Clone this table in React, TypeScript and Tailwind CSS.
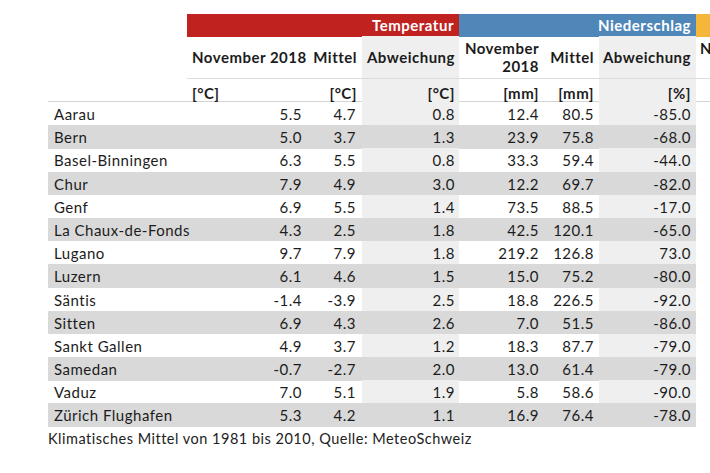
const rows: [string, string, string, string, string, string, string][] = [
  ['Aarau', '5.5', '4.7', '0.8', '12.4', '80.5', '-85.0'],
  ['Bern', '5.0', '3.7', '1.3', '23.9', '75.8', '-68.0'],
  ['Basel-Binningen', '6.3', '5.5', '0.8', '33.3', '59.4', '-44.0'],
  ['Chur', '7.9', '4.9', '3.0', '12.2', '69.7', '-82.0'],
  ['Genf', '6.9', '5.5', '1.4', '73.5', '88.5', '-17.0'],
  ['La Chaux-de-Fonds', '4.3', '2.5', '1.8', '42.5', '120.1', '-65.0'],
  ['Lugano', '9.7', '7.9', '1.8', '219.2', '126.8', '73.0'],
  ['Luzern', '6.1', '4.6', '1.5', '15.0', '75.2', '-80.0'],
  ['Säntis', '-1.4', '-3.9', '2.5', '18.8', '226.5', '-92.0'],
  ['Sitten', '6.9', '4.3', '2.6', '7.0', '51.5', '-86.0'],
  ['Sankt Gallen', '4.9', '3.7', '1.2', '18.3', '87.7', '-79.0'],
  ['Samedan', '-0.7', '-2.7', '2.0', '13.0', '61.4', '-79.0'],
  ['Vaduz', '7.0', '5.1', '1.9', '5.8', '58.6', '-90.0'],
  ['Zürich Flughafen', '5.3', '4.2', '1.1', '16.9', '76.4', '-78.0'],
]

const cols = 'grid grid-cols-[139px_123px_52px_97px_84px_56px_97px_60px]'

export default function App() {
  return (
    <div className="w-[710px] h-[473px] overflow-hidden bg-white text-[#1c1c1c] font-['Lato','Open_Sans',sans-serif] text-[15px] tracking-[0.5px]">
      <div className="ml-[48px] mt-[14px] w-[800px]">
        {/* Gruppen-Kopf */}
        <div className={`${cols} h-[22px] font-bold text-white`}>
          <div />
          <div className="col-span-3 bg-[#c0231f] flex items-center justify-end pr-[5px]">Temperatur</div>
          <div className="col-span-3 bg-[#4f87b9] flex items-center justify-end pr-[5px]">Niederschlag</div>
          <div className="bg-[#f5b73b]" />
        </div>

        {/* Spaltenköpfe */}
        <div className={`${cols} h-[43px] font-bold leading-[18px]`}>
          <div />
          <div className="flex items-center pl-[5px] border-b border-[#dcdcdc] whitespace-nowrap">November 2018</div>
          <div className="flex items-center justify-end pr-[5px] border-b border-[#dcdcdc]">Mittel</div>
          <div className="flex items-center justify-end pr-[4px] bg-[#efefef] border-b border-[#dcdcdc]">Abweichung</div>
          <div className="flex flex-col items-end justify-center pr-[4px] border-b border-[#dcdcdc]">
            <span>November</span>
            <span>2018</span>
          </div>
          <div className="flex items-center justify-end pr-[5px] border-b border-[#dcdcdc]">Mittel</div>
          <div className="flex items-center justify-end pr-[5px] bg-[#efefef] border-b border-[#dcdcdc]">Abweichung</div>
          <div className="pl-[4px] pt-[3px] border-b border-[#dcdcdc]">November</div>
        </div>

        {/* Einheiten */}
        <div className={`${cols} h-[23px] font-bold border-b border-[#d4d4d4]`}>
          <div />
          <div className="flex items-center pt-[3px] pl-[5px]">[°C]</div>
          <div className="flex items-center pt-[3px] justify-end pr-[5px]">[°C]</div>
          <div className="flex items-center pt-[3px] justify-end pr-[4px] bg-[#efefef]">[°C]</div>
          <div className="flex items-center pt-[3px] justify-end pr-[4px]">[mm]</div>
          <div className="flex items-center pt-[3px] justify-end pr-[5px]">[mm]</div>
          <div className="flex items-center pt-[3px] justify-end pr-[5px] bg-[#efefef]">[%]</div>
          <div />
        </div>

        {/* Daten */}
        {rows.map((r, i) => {
          const odd = i % 2 === 1
          const abw = odd ? '' : 'bg-[#efefef]'
          return (
            <div key={r[0]} className={`${cols} h-[23.2px] items-stretch`}>
              <div className={`col-span-7 grid grid-cols-[139px_123px_52px_97px_84px_56px_97px] ${odd ? 'bg-[#d9d9d9]' : ''}`}>
                <div className="flex items-center pt-[1px] pl-[6px] whitespace-nowrap">{r[0]}</div>
                <div className="flex items-center pt-[1px] justify-end pr-[8px]">{r[1]}</div>
                <div className="flex items-center pt-[1px] justify-end pr-[6px]">{r[2]}</div>
                <div className={`flex items-center pt-[1px] justify-end pr-[4px] ${abw}`}>{r[3]}</div>
                <div className="flex items-center pt-[1px] justify-end pr-[4px]">{r[4]}</div>
                <div className="flex items-center pt-[1px] justify-end pr-[5px]">{r[5]}</div>
                <div className={`flex items-center pt-[1px] justify-end pr-[5px] ${abw}`}>{r[6]}</div>
              </div>
              <div />
            </div>
          )
        })}

        <p className="mt-[1px] text-[14.5px] tracking-[0.5px] text-[#222]">
          Klimatisches Mittel von 1981 bis 2010, Quelle: MeteoSchweiz
        </p>
      </div>
    </div>
  )
}
